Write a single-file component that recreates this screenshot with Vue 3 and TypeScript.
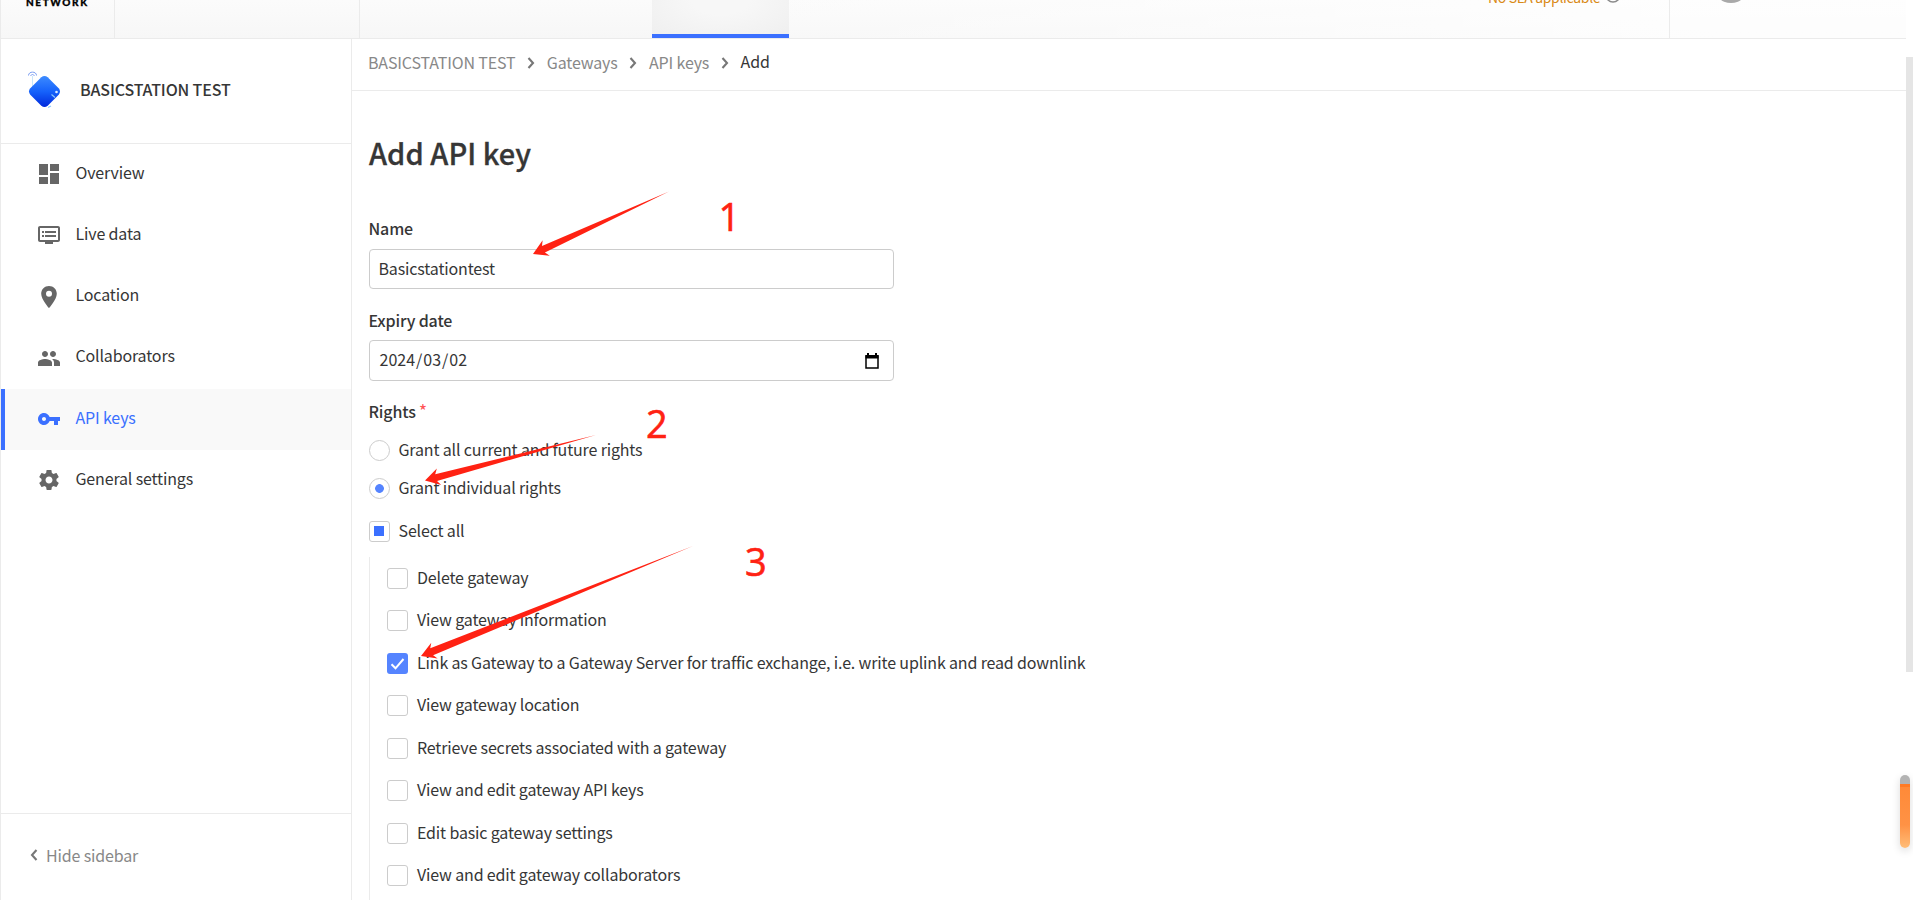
<script setup lang="ts">
interface NavItem { label: string; path: string; active?: boolean }
interface Right { label: string; checked: boolean }
interface Arrow { x: number; y: number; length: number; angle: number; thick: number }

const navItems: NavItem[] = [
  { label: 'Overview', path: 'M2 2h9v11H2zM13 2h9v7h-9zM2 15h9v7H2zM13 11h9v11h-9z' },
  { label: 'Live data', path: 'M21 3H3c-1.1 0-2 .9-2 2v12c0 1.1.9 2 2 2h5v2h8v-2h5c1.1 0 2-.9 2-2V5c0-1.1-.9-2-2-2zm0 14H3V5h18v12zM19 8H8v2h11V8zm0 4H8v2h11v-2zM7 8H5v2h2V8zm0 4H5v2h2v-2z' },
  { label: 'Location', path: 'M12 1C7.6 1 4.2 4.4 4.2 8.7 4.2 14.600 12 23 12 23s7.800-8.400 7.800-14.300C19.800 4.400 16.400 1 12 1zm0 10.700a3 3 0 1 1 0-6 3 3 0 0 1 0 6z' },
  { label: 'Collaborators', path: 'M16 11c1.660 0 2.990-1.340 2.990-3S17.660 5 16 5s-3 1.340-3 3 1.340 3 3 3zm-8 0c1.660 0 2.990-1.340 2.990-3S9.660 5 8 5 5 6.340 5 8s1.340 3 3 3zm0 2c-2.330 0-7 1.170-7 3.500V20h14v-3.500c0-2.330-4.670-3.500-7-3.500zm8 0c-.29 0-.62.02-.97.05 1.160.84 1.970 1.970 1.970 3.450V20h6v-3.500c0-2.330-4.670-3.500-7-3.500z' },
  { label: 'API keys', active: true, path: 'M12.650 10C11.830 7.670 9.610 6 7 6c-3.310 0-6 2.690-6 6s2.690 6 6 6c2.610 0 4.830-1.670 5.650-4H17v4h4v-4h2v-4H12.650zM7 14c-1.100 0-2-.9-2-2s.9-2 2-2 2 .9 2 2-.9 2-2 2z' },
  { label: 'General settings', path: 'M19.430 12.980c.04-.32.07-.64.07-.98s-.03-.66-.07-.98l2.110-1.650c.19-.15.24-.42.12-.64l-2-3.460c-.12-.22-.39-.3-.61-.22l-2.490 1c-.52-.4-1.080-.73-1.690-.98l-.38-2.650C14.460 2.180 14.250 2 14 2h-4c-.25 0-.46.18-.49.42l-.38 2.650c-.61.25-1.170.59-1.690.98l-2.490-1c-.23-.09-.49 0-.61.22l-2 3.460c-.13.22-.07.49.12.64l2.110 1.650c-.04.32-.07.65-.07.98s.03.66.07.98l-2.110 1.650c-.19.15-.24.42-.12.64l2 3.460c.12.22.39.3.61.22l2.490-1c.52.4 1.080.73 1.690.98l.38 2.650c.03.24.24.42.49.42h4c.25 0 .46-.18.49-.42l.38-2.650c.61-.25 1.170-.59 1.690-.98l2.490 1c.23.09.49 0 .61-.22l2-3.460c.12-.22.07-.49-.12-.64l-2.110-1.650zM12 15.500c-1.930 0-3.500-1.570-3.500-3.500s1.570-3.500 3.500-3.500 3.500 1.570 3.500 3.500-1.570 3.500-3.500 3.500z' },
]

const crumbs: string[] = ['BASICSTATION TEST', 'Gateways', 'API keys']

const rights: Right[] = [
  { label: 'Delete gateway', checked: false },
  { label: 'View gateway information', checked: false },
  { label: 'Link as Gateway to a Gateway Server for traffic exchange, i.e. write uplink and read downlink', checked: true },
  { label: 'View gateway location', checked: false },
  { label: 'Retrieve secrets associated with a gateway', checked: false },
  { label: 'View and edit gateway API keys', checked: false },
  { label: 'Edit basic gateway settings', checked: false },
  { label: 'View and edit gateway collaborators', checked: false },
]

const makeArrow = (x: number, y: number, tx: number, ty: number, thick: number): Arrow => ({
  x, y, thick,
  length: Math.hypot(tx - x, ty - y),
  angle: (Math.atan2(ty - y, tx - x) * 180) / Math.PI,
})
const arrows: Arrow[] = [
  makeArrow(533, 254, 669, 191.500, 3.500),
  makeArrow(425, 480.500, 596, 435, 3.500),
  makeArrow(421, 656, 693, 546, 3.800),
]
const shape = (a: Arrow): string =>
  `M0 0L14.500 -8.500L11.500 -${a.thick}L${a.length} 0L11.500 ${a.thick}L14.500 8.500Z`
const steps = [
  { n: '1', x: 718.500, y: 231 },
  { n: '2', x: 646, y: 437.500 },
  { n: '3', x: 745, y: 575.500 },
]
</script>

<template>
  <div class="page">
    <header class="topbar">
      <div class="brand"><span>NETWORK</span></div>
      <div class="lead"></div>
      <div class="tabs"><div class="tab-active"></div></div>
      <div class="sla"><span>No SLA applicable</span>
        <svg class="help" viewBox="0 0 16 16"><circle cx="8" cy="8" r="7" /><path d="M5.800 6.200a2.200 2.200 0 1 1 3.300 1.900Q8 8.800 8 9.800M8 11v1.500" /></svg>
      </div>
      <div class="user"><i class="avatar"></i></div>
    </header>
    <div class="body">
      <aside class="sidebar">
        <div class="entity">
          <svg class="logo" viewBox="0 0 36 42">
            <defs><linearGradient id="gem" x1=".5" y1="0" x2=".5" y2="1"><stop offset="0" stop-color="#3d8bff" /><stop offset=".5" stop-color="#1662fb" /><stop offset="1" stop-color="#0029dc" /></linearGradient></defs>
            <path d="M7.500 7v12" stroke="#c9e6fb" stroke-width="1" fill="none" />
            <path d="M3.500 6.500C3.500 2 11.500 2 11.500 6.500M5.700 7c.5-2 3.100-2 3.600 0" stroke="#7d9ff3" stroke-width="1" fill="none" />
            <path d="M16.300 8.300q3.200-2.600 6.400 0l11 11q2.600 3.200 0 6.400l-11 11q-3.200 2.600-6.400 0l-11-11q-2.600-3.200 0-6.400z" fill="url(#gem)" />
            <circle cx="31.500" cy="23" r="1.300" fill="#dcecff" />
            <path d="M26.500 25.500l3.500 3M23 38.500l3-1.500" stroke="#8cc8fb" stroke-width="1.200" />
          </svg>
          <span class="entity-name">BASICSTATION TEST</span>
        </div>
        <nav class="nav">
          <a v-for="item in navItems" :key="item.label" class="nav-item" :class="{ active: item.active }">
            <svg viewBox="0 0 24 24"><path :d="item.path" fill-rule="evenodd" /></svg>
            <span>{{ item.label }}</span>
          </a>
        </nav>
        <div class="hide">
          <svg viewBox="0 0 8 12"><path d="M6.500 1L2 6l4.500 5" /></svg>
          <span>Hide sidebar</span>
        </div>
      </aside>
      <main class="main">
        <div class="crumbs">
          <template v-for="c in crumbs" :key="c">
            <span>{{ c }}</span>
            <svg viewBox="0 0 8 12"><path d="M1.500 1L6 6l-4.500 5" /></svg>
          </template>
          <span class="current">Add</span>
        </div>
        <div class="form">
          <h1>Add API key</h1>
          <div class="label">Name</div>
          <div class="input name"><span>Basicstationtest</span></div>
          <div class="label second">Expiry date</div>
          <div class="input date">
            <span>2024<b>/</b>03<b>/</b>02</span>
            <svg viewBox="0 0 14 16"><path d="M1 3h12v12H1z" fill="none" stroke="#000" stroke-width="1.500" /><path d="M.5 2h13v3.500H.5zM2 0h2v3H2zM10 0h2v3h-2z" /></svg>
          </div>
          <div class="label third">Rights<em>*</em></div>
          <div class="option first"><i class="radio"></i><span>Grant all current and future rights</span></div>
          <div class="option"><i class="radio on"></i><span>Grant individual rights</span></div>
          <div class="option all"><i class="check some"></i><span>Select all</span></div>
          <div class="group">
            <div v-for="r in rights" :key="r.label" class="option child">
              <i class="check" :class="{ on: r.checked }"><svg v-if="r.checked" viewBox="0 0 21 21"><path d="M4.500 11.300l4 4 8-9.300" /></svg></i>
              <span>{{ r.label }}</span>
            </div>
          </div>
        </div>
      </main>
    </div>
    <div class="scroll-thumb"></div>
    <div class="meter"></div>
    <svg class="notes" viewBox="0 0 1913 900">
      <path v-for="(a, i) in arrows" :key="i" :d="shape(a)" :transform="`translate(${a.x} ${a.y}) rotate(${a.angle})`" />
      <text v-for="s in steps" :key="s.n" :x="s.x" :y="s.y">{{ s.n }}</text>
    </svg>
  </div>
</template>

<style>
html, body { margin: 0; background: #fff; overflow: hidden; }
</style>

<style scoped>
* { box-sizing: border-box; }
.page {
  position: relative; width: 1913px; height: 900px; overflow: hidden; border-left: 1px solid #ebebeb;
  display: flex; flex-direction: column; background: #fff; color: #363636;
  font: 16px/24px "Noto Sans CJK SC", "Noto Sans", sans-serif; letter-spacing: -.155px;
}
span { white-space: nowrap; }
.topbar { width: 1905px; height: 39px; flex: none; display: flex; border-bottom: 1px solid #ebebeb; background: linear-gradient(90deg, rgba(255,255,255,0) 30%, rgba(255,255,255,.75) 90%), linear-gradient(#fbfbfb, #f7f7f7); overflow: hidden; }
.brand { width: 114px; flex: none; border-right: 1px solid #ebebeb; padding-left: 25px; }
.brand span { display: block; margin-top: -7px; font: 900 10px/18px Lato, sans-serif; letter-spacing: 1.600px; color: #000; -webkit-text-stroke: .3px #000; }
.lead { width: 245px; flex: none; border-right: 1px solid #ebebeb; }
.tabs { width: 1310px; border-right: 1px solid #ebebeb; padding-left: 292px; flex: none; margin-right: -1px; }
.tab-active { width: 137px; height: 38px; border-bottom: 4px solid #3b70ff; background: radial-gradient(ellipse at 50% 0, #f7f7f7 30%, #efefef 100%); }
.sla { width: 0; display: flex; flex: none; margin-left: -181px; margin-right: 181px; color: #d98a16; }
.sla span { margin-top: -15px; height: 24px; font-size: 14px; line-height: 24px; letter-spacing: -.320px; }
.help { width: 16px; height: 16px; flex: none; margin: -13px 0 0 5px; fill: none; stroke: #8a8a8a; stroke-width: 1.500; }
.user { flex: 1; padding-left: 44px; }
.avatar { display: block; width: 36px; height: 36px; margin-top: -33px; border-radius: 50%; background: #a9a9a9; }
.body { display: flex; flex: 1; min-height: 0; width: 1905px; }
.sidebar { width: 351px; border-right: 1px solid #ebebeb; display: flex; flex-direction: column; }
.entity { height: 105px; border-bottom: 1px solid #ebebeb; display: flex; align-items: flex-start; padding-left: 24px; }
.logo { width: 36px; height: 42px; margin-top: 30px; }
.entity-name { margin: 38px 0 0 19px; font-weight: 500; }
.nav { flex: 1; }
.nav-item { display: flex; align-items: center; height: 61.250px; padding: 0 0 4px 36px; }
.nav-item svg { width: 24px; height: 24px; margin: 3px 15px 0 0; fill: #666; }
.nav-item span { margin: -2px 0 0 -.500px; }
.nav-item.active { background: #f9f9f9; color: #3b70ff; border-left: 4px solid #3b70ff; padding-left: 32px; }
.nav-item.active svg { fill: #3b70ff; }
.hide { height: 87px; border-top: 1px solid #ebebeb; display: flex; align-items: center; padding: 0 0 4px 29px; color: #888; }
.hide svg { width: 8px; height: 12px; margin-right: 8px; }
.hide path, .crumbs path { fill: none; stroke: #777; stroke-width: 2.100; }
.main { flex: 1; }
.crumbs { height: 52px; border-bottom: 1px solid #ebebeb; display: flex; align-items: center; padding: 0 0 6px 16px; color: #888; }
.crumbs svg { width: 8px; height: 12px; margin: 3px 11.700px 0; }
.current { color: #363636; margin-top: -1px; }
.form { padding-left: 17px; }
h1 { margin: 39px 0 0; height: 44px; font-size: 29px; line-height: 44px; font-weight: 500; letter-spacing: .05px; -webkit-text-stroke: .3px #363636; }
.label { margin-top: 42px; height: 24px; font-weight: 500; margin-left: -.500px; }
.label em { color: #f55; font-style: normal; font-weight: 400; margin-left: 3px; font-size: 18px; line-height: 20px; }
.input { width: 525px; border: 1px solid #ccc; border-radius: 4px; display: flex; align-items: center; justify-content: space-between; padding: 0 13px 2px 8.500px; }
.name { height: 40px; margin-top: 9px; }
.second { margin-top: 19px; }
.date { height: 41px; margin-top: 8px; padding-bottom: 4px; }
.date span { letter-spacing: 0; margin-left: 1px; }
.date b { font-weight: 400; margin: 0 1px; }
.date svg { width: 14px; height: 16px; margin: 4px 1px 0 0; }
.third { margin-top: 18px; }
.option { display: flex; align-items: center; height: 38px; margin-left: -.500px; }
.first { margin-top: 8px; }
.option span { margin: -3px 0 0 9px; }
.radio { width: 21px; height: 21px; border: 1px solid #ccc; border-radius: 50%; flex: none; }
.radio.on { background: radial-gradient(circle, #5584ff 4px, #fff 4.700px); }
.check { width: 21px; height: 21px; border: 1px solid #ccc; border-radius: 3px; flex: none; }
.some { background: linear-gradient(#3b70ff, #3b70ff) center / 10px 10px no-repeat; }
.check.on { background: #5584ff; border: 0; }
.check svg { width: 21px; height: 21px; display: block; fill: none; stroke: #fff; stroke-width: 2; }
.all { margin-top: 5px; }
.group { border-left: 1px solid #ebebeb; margin-top: 7px; padding: .300px 0 20px 17px; }
.child { height: 42.430px; margin-left: 0; }
.scroll-thumb { position: absolute; left: 1905px; top: 57px; width: 7px; height: 615px; background: #e5e5e5; }
.meter { position: absolute; left: 1899px; top: 775px; width: 10px; height: 73px; border-radius: 5px; background: linear-gradient(#b3b3b3 0 9px, #ff7a24 9px 12px, #ff8a38 12px, #ff9245 50px, #ffbd78); box-shadow: 0 3px 9px rgba(0,0,0,.14); }
.notes { position: absolute; left: -1px; top: 0; width: 1913px; height: 900px; fill: #ff2213; pointer-events: none; }
.notes text { font: 38px "Open Sans", sans-serif; letter-spacing: 0; stroke: #ff2213; stroke-width: .6px; }
</style>
